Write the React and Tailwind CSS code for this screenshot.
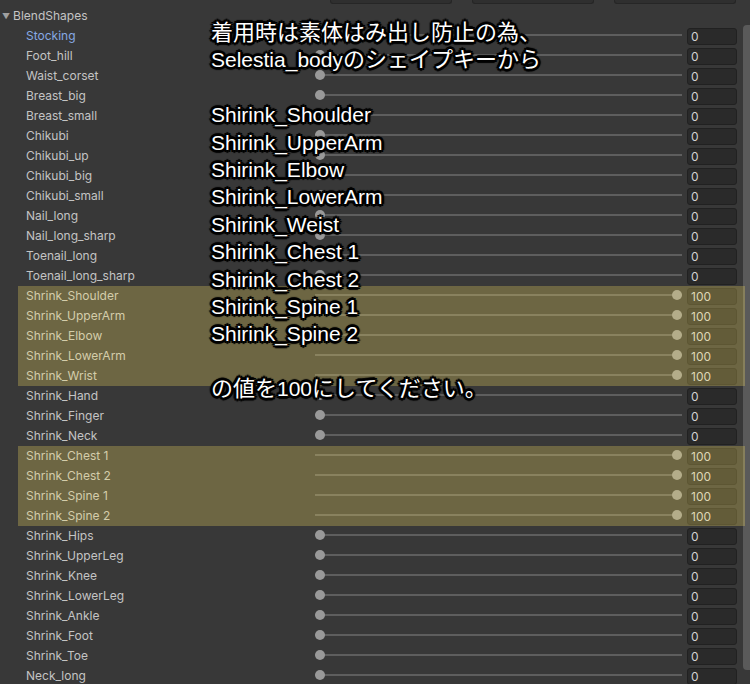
const groups = [
    {
        hl: false,
        rows: [
            ['Stocking', 0],
            ['Foot_hill', 0],
            ['Waist_corset', 0],
            ['Breast_big', 0],
            ['Breast_small', 0],
            ['Chikubi', 0],
            ['Chikubi_up', 0],
            ['Chikubi_big', 0],
            ['Chikubi_small', 0],
            ['Nail_long', 0],
            ['Nail_long_sharp', 0],
            ['Toenail_long', 0],
            ['Toenail_long_sharp', 0]
        ]
    },
    {
        hl: true,
        rows: [
            ['Shrink_Shoulder', 100],
            ['Shrink_UpperArm', 100],
            ['Shrink_Elbow', 100],
            ['Shrink_LowerArm', 100],
            ['Shrink_Wrist', 100]
        ]
    },
    {
        hl: false,
        rows: [
            ['Shrink_Hand', 0],
            ['Shrink_Finger', 0],
            ['Shrink_Neck', 0]
        ]
    },
    {
        hl: true,
        rows: [
            ['Shrink_Chest 1', 100],
            ['Shrink_Chest 2', 100],
            ['Shrink_Spine 1', 100],
            ['Shrink_Spine 2', 100]
        ]
    },
    {
        hl: false,
        rows: [
            ['Shrink_Hips', 0],
            ['Shrink_UpperLeg', 0],
            ['Shrink_Knee', 0],
            ['Shrink_LowerLeg', 0],
            ['Shrink_Ankle', 0],
            ['Shrink_Foot', 0],
            ['Shrink_Toe', 0],
            ['Neck_long', 0]
        ]
    }
];

const Jp = ({ children }) => <span className="text-[22px]">{children}</span>;

const note = [
    <Jp>着用時は素体はみ出し防止の為、</Jp>,
    <>Selestia_body<Jp>のシェイプキーから</Jp></>,
    null,
    'Shirink_Shoulder',
    'Shirink_UpperArm',
    'Shirink_Elbow',
    'Shirink_LowerArm',
    'Shirink_Weist',
    'Shirink_Chest 1',
    'Shirink_Chest 2',
    'Shirink_Spine 1',
    'Shirink_Spine 2',
    null,
    <><Jp>の値を</Jp>100<Jp>にしてください。</Jp></>
];

const ShapeRow = ({ name, value, first }) => (
    <div className="h-[20px] shrink-0 flex items-center">
        <div className={`w-[315px] pl-[26px] text-[12px] truncate ${first ? 'text-[#86a9e4]' : 'text-[#c4c4c4]'}`}>
            {name}
        </div>
        <div className="relative flex-1 h-full flex items-center">
            <div className="w-full h-[2px] bg-[#5e5e5e] -translate-y-[1px]" />
            <div
                className="absolute top-1/2 w-[10px] h-[10px] -mt-[6px] -ml-[5px] rounded-full bg-[#999999]"
                style={{ left: `calc(5px + (100% - 10px) * ${value / 100})` }}
            />
        </div>
        <div className="ml-[5px] mr-[5px] w-[50px] h-[17px] rounded-[3px] bg-[#2a2a2a] border border-[#212121] text-[#d2d2d2] text-[12px] leading-[15px] pl-[3px]">
            {value}
        </div>
    </div>
);

const App = function() {
    return (
        <div className="relative w-[750px] h-[684px] overflow-hidden bg-[#383838] font-['Inter',sans-serif] flex">
            <div className="flex-1 flex flex-col">
                <div className="h-[6px] shrink-0 flex items-start gap-[20px] pl-[330px]">
                    <div className="w-[122px] h-[4px] bg-[#2f2f2f] border border-t-0 border-[#262626] rounded-b-[3px]" />
                    <div className="w-[122px] h-[4px] bg-[#2f2f2f] border border-t-0 border-[#262626] rounded-b-[3px]" />
                    <div className="w-[122px] h-[4px] bg-[#2f2f2f] border border-t-0 border-[#262626] rounded-b-[3px]" />
                </div>

                <div className="h-[20px] shrink-0 flex items-center gap-[3px] pl-[2px] text-[12px] text-[#c4c4c4]">
                    <span className="text-[8px] text-[#a0a0a0]">▼</span>
                    <span>BlendShapes</span>
                </div>

                {groups.map((g, gi) => (
                    <div key={gi} className="relative shrink-0 flex flex-col">
                        {g.rows.map(([name, value]) => (
                            <ShapeRow key={name} name={name} value={value} first={name === 'Stocking'} />
                        ))}
                        {g.hl && (
                            <div className="absolute inset-y-0 left-[18px] -right-[3px] z-10 bg-[rgba(255,230,100,0.27)]" />
                        )}
                    </div>
                ))}
            </div>

            <div className="w-[8px] pt-[25px] flex justify-end">
                <div className="w-[7px] h-[645px] rounded-l-[4px] bg-[#5a5a5a]" />
            </div>

            <div className="absolute left-[211px] top-[19px] z-20 text-white text-[21px] leading-[27.4px] font-['Liberation_Sans','Noto_Sans_CJK_JP',sans-serif] [text-shadow:2px_0_0_#000,-2px_0_0_#000,0_2px_0_#000,0_-2px_0_#000,2px_2px_0_#000,-2px_-2px_0_#000,2px_-2px_0_#000,-2px_2px_0_#000,3px_0_1px_#000,-3px_0_1px_#000,0_3px_1px_#000,0_-3px_1px_#000,0_0_3px_#000]">
                {note.map((line, i) => (
                    <div key={i} className="h-[27.4px] whitespace-pre">{line || ' '}</div>
                ))}
            </div>
        </div>
    );
};

export default App;
